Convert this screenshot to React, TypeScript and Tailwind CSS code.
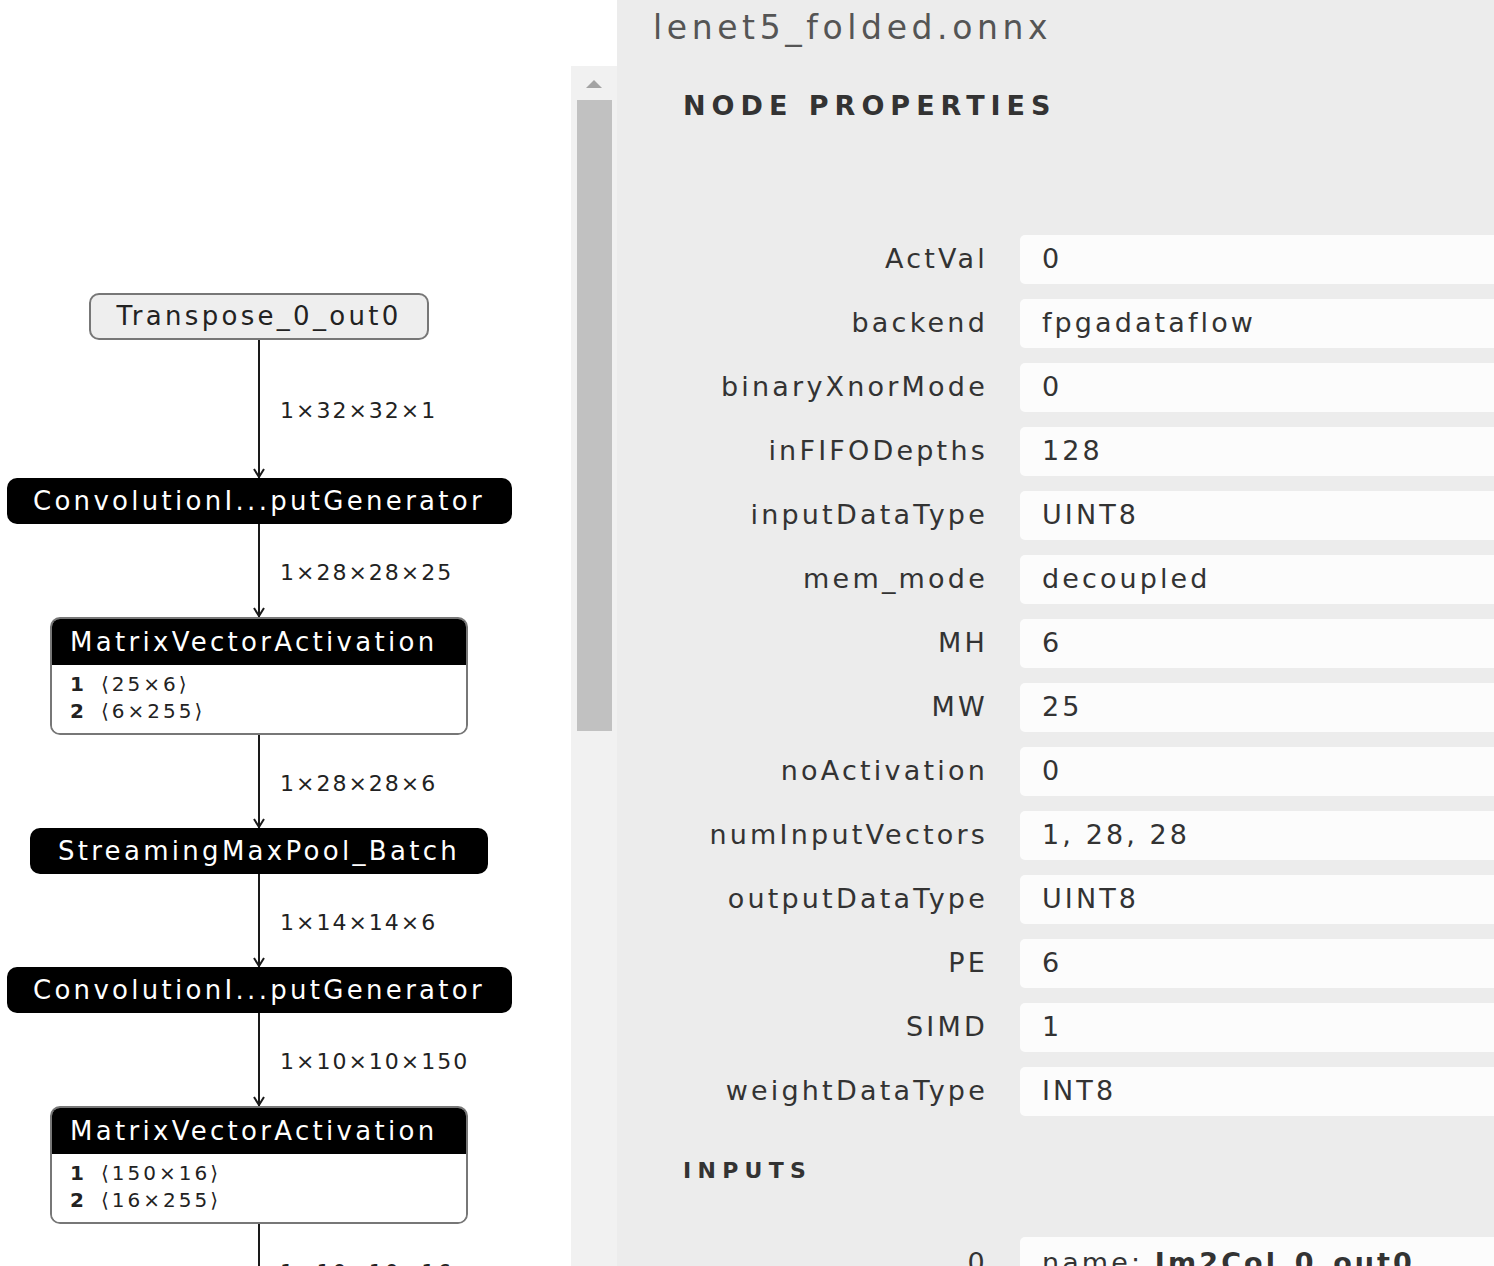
import React from "react";

const font = { fontFamily: '"DejaVu Sans", "Open Sans", sans-serif' };

const props: [string, string][] = [
  ["ActVal", "0"],
  ["backend", "fpgadataflow"],
  ["binaryXnorMode", "0"],
  ["inFIFODepths", "128"],
  ["inputDataType", "UINT8"],
  ["mem_mode", "decoupled"],
  ["MH", "6"],
  ["MW", "25"],
  ["noActivation", "0"],
  ["numInputVectors", "1, 28, 28"],
  ["outputDataType", "UINT8"],
  ["PE", "6"],
  ["SIMD", "1"],
  ["weightDataType", "INT8"],
];

function Edge({ label, h, arrow = true }: { label: string; h: number; arrow?: boolean }) {
  return (
    <div className="relative w-[2px] bg-[#1a1a1a]" style={{ height: h }}>
      <span className="absolute left-[22px] top-1/2 -translate-y-[42%] whitespace-nowrap text-[22px] leading-none text-[#222] tracking-[2px]">
        {label}
      </span>
      {arrow && (
        <svg className="absolute -left-[5px] bottom-0" width="12" height="10" viewBox="0 0 12 10">
          <path d="M1 1 L6 9 L11 1" fill="none" stroke="#1a1a1a" strokeWidth="2" />
        </svg>
      )}
    </div>
  );
}

function BlackNode({ name, w }: { name: string; w: number }) {
  return (
    <div
      className="h-[46px] rounded-[10px] bg-black text-white text-[26px] flex items-center justify-center tracking-[3.3px]"
      style={{ width: w }}
    >
      {name}
    </div>
  );
}

function MvaNode({ a, b }: { a: string; b: string }) {
  return (
    <div className="w-[418px] rounded-[10px] border-2 border-[#777] overflow-hidden">
      <div className="h-[46px] bg-black text-white text-[26px] flex items-center pl-[18px] tracking-[3.3px]">
        MatrixVectorActivation
      </div>
      <div className="bg-white h-[68px] pl-[18px] pt-[6px] text-[20px] leading-[27px] text-[#222] tracking-[3px]">
        <div>
          <span className="font-bold mr-[14px]">1</span>⟨{a}⟩
        </div>
        <div>
          <span className="font-bold mr-[14px]">2</span>⟨{b}⟩
        </div>
      </div>
    </div>
  );
}

export default function App() {
  return (
    <div className="flex h-[1266px] w-[1494px] overflow-hidden bg-white" style={font}>
      <div className="w-[571px] shrink-0">
        <div className="w-[518px] flex flex-col items-center pt-[293px]">
          <div className="w-[340px] h-[47px] rounded-[10px] border-2 border-[#777] bg-[#eee] text-[26px] text-[#222] flex items-center justify-center tracking-[3.3px]">
            Transpose_0_out0
          </div>
          <Edge label="1×32×32×1" h={138} />
          <BlackNode name="ConvolutionI...putGenerator" w={505} />
          <Edge label="1×28×28×25" h={93} />
          <MvaNode a="25×6" b="6×255" />
          <Edge label="1×28×28×6" h={93} />
          <BlackNode name="StreamingMaxPool_Batch" w={458} />
          <Edge label="1×14×14×6" h={93} />
          <BlackNode name="ConvolutionI...putGenerator" w={505} />
          <Edge label="1×10×10×150" h={93} />
          <MvaNode a="150×16" b="16×255" />
          <Edge label="1×10×10×16" h={93} arrow={false} />
        </div>
      </div>

      <div className="w-[46px] shrink-0 pt-[66px]">
        <div className="h-full bg-[#f1f1f1] flex flex-col items-center">
          <svg className="mt-[13px]" width="18" height="10" viewBox="0 0 18 10">
            <path d="M1 9 L9 1 L17 9 Z" fill="#a3a3a3" />
          </svg>
          <div className="mt-[11px] w-[35px] h-[631px] bg-[#c1c1c1]" />
        </div>
      </div>

      <div className="flex-1 bg-[#ececec] min-w-0">
        <div className="pl-[36px] h-[56px] leading-[56px] text-[33px] text-[#555] tracking-[4.6px]">lenet5_folded.onnx</div>
        <div className="pl-[66px] mt-[30px] leading-[40px] text-[27px] font-bold text-[#333] tracking-[6px]">
          NODE PROPERTIES
        </div>
        <div className="pt-[109px] flex flex-col gap-[15px]">
          {props.map(([k, v]) => (
            <div key={k} className="flex items-center gap-[32px]">
              <div className="w-[371px] shrink-0 text-right text-[27px] text-[#333] tracking-[3.2px]">{k}</div>
              <div className="flex-1 h-[49px] rounded-l-[5px] bg-[#fcfcfc] flex items-center pl-[22px] text-[27px] text-[#333] tracking-[3.1px]">
                {v}
              </div>
            </div>
          ))}
        </div>
        <div className="pl-[66px] mt-[40px] leading-[30px] text-[22px] font-bold text-[#333] tracking-[6.3px]">INPUTS</div>
        <div className="mt-[51px] flex items-start gap-[32px]">
          <div className="w-[371px] shrink-0 text-right text-[27px] text-[#333] tracking-[3.2px] pt-[6px]">0</div>
          <div className="flex-1 h-[60px] rounded-l-[5px] bg-[#fcfcfc] pl-[22px] pt-[6px] text-[27px] text-[#333] tracking-[3.1px]">
            name: <span className="font-bold">Im2Col_0_out0</span>
          </div>
        </div>
      </div>
    </div>
  );
}
